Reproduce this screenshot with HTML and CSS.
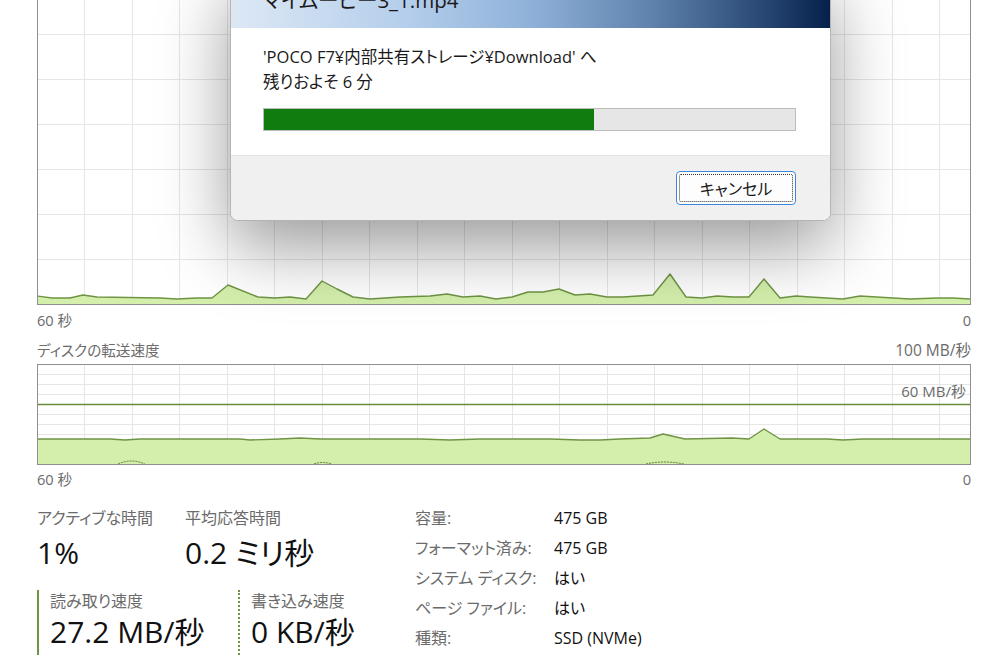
FILE: index.html
```html
<!DOCTYPE html>
<html lang="ja">
<head>
<meta charset="utf-8">
<title>ディスク</title>
<link rel="stylesheet" href="styles.css">
</head>
<body>
<div class="page">
  <div class="graph graph-top">
    <svg class="gsvg" width="932" height="344" viewBox="38 -40 932 344">
      <path class="grid" d="M84.5 -40V304M132.5 -40V304M179.5 -40V304M227.5 -40V304M274.5 -40V304M322.5 -40V304M369.5 -40V304M417.5 -40V304M464.5 -40V304M512.5 -40V304M559.5 -40V304M607.5 -40V304M654.5 -40V304M702.5 -40V304M749.5 -40V304M797.5 -40V304M844.5 -40V304M892.5 -40V304M939.5 -40V304M38 34.5H970M38 79.5H970M38 124.5H970M38 169.5H970M38 214.5H970M38 259.5H970"/>
      <path class="fill" d="M37 304L37 296 52 298 70 298 83 295 97 297 160 298 177 299 197 298 212 298 228 285 258 297 275 298 290 297 306 299 322 281 337 289 353 297 370 299 400 297 430 296 447 294 463 297 480 296 496 299 512 297 528 292 543 292 559 289 575 295 590 294 607 297 623 297 653 295 670 274 686 297 702 298 717 296 733 297 749 297 764 279 780 298 796 296 810 297 843 299 860 296 893 298 910 299 937 298 953 298 970 299 970 304Z"/>
      <polyline class="line" points="37,296 52,298 70,298 83,295 97,297 160,298 177,299 197,298 212,298 228,285 258,297 275,298 290,297 306,299 322,281 337,289 353,297 370,299 400,297 430,296 447,294 463,297 480,296 496,299 512,297 528,292 543,292 559,289 575,295 590,294 607,297 623,297 653,295 670,274 686,297 702,298 717,296 733,297 749,297 764,279 780,298 796,296 810,297 843,299 860,296 893,298 910,299 937,298 953,298 970,299"/>
    </svg>
  </div>
  <div class="axis axis-1"><span>60 秒</span><span>0</span></div>
  <div class="axis axis-title"><span>ディスクの転送速度</span><span>100 MB/秒</span></div>
  <div class="graph graph-disk">
    <svg class="gsvg" width="932" height="99" viewBox="38 365 932 99">
      <path class="grid" d="M84.5 365V464M132.5 365V464M179.5 365V464M227.5 365V464M274.5 365V464M322.5 365V464M369.5 365V464M417.5 365V464M464.5 365V464M512.5 365V464M559.5 365V464M607.5 365V464M654.5 365V464M702.5 365V464M749.5 365V464M797.5 365V464M844.5 365V464M892.5 365V464M939.5 365V464M38 374.5H970M38 384.5H970M38 394.5H970M38 414.5H970M38 424.5H970M38 434.5H970M38 444.5H970M38 454.5H970"/>
      <path class="fill" d="M37 464L37 439 110 439 125 440 140 439 240 439 250 440 280 439 300 438 320 439 420 439 450 440 480 439 550 439 580 440 600 440 620 439 650 438 663 434 685 439 732 438 749 439 764 429 780 439 827 439 843 440 863 439 970 439 970 464Z"/>
      <polyline class="line" points="37,439 110,439 125,440 140,439 240,439 250,440 280,439 300,438 320,439 420,439 450,440 480,439 550,439 580,440 600,440 620,439 650,438 663,434 685,439 732,438 749,439 764,429 780,439 827,439 843,440 863,439 970,439"/>
      <path class="limit" d="M38 404.5H970"/>
      <path class="write" d="M118 464Q131 458 145 464M314 464Q322 461 332 464M646 464Q664 460 684 464"/>
    </svg>
    <span class="limit-label">60 MB/秒</span>
  </div>
  <div class="axis axis-2"><span>60 秒</span><span>0</span></div>

  <div class="stats">
    <div class="stats-left">
      <div class="stat-row">
        <div class="stat stat-active">
          <div class="stat-label">アクティブな時間</div>
          <div class="stat-value">1%</div>
        </div>
        <div class="stat">
          <div class="stat-label">平均応答時間</div>
          <div class="stat-value">0.2 ミリ秒</div>
        </div>
      </div>
      <div class="stat-row rate-row">
        <div class="stat rate rate-read">
          <div class="stat-label">読み取り速度</div>
          <div class="stat-value">27.2 MB/秒</div>
        </div>
        <div class="stat rate rate-write">
          <div class="stat-label">書き込み速度</div>
          <div class="stat-value">0 KB/秒</div>
        </div>
      </div>
    </div>
    <dl class="props">
      <dt>容量:</dt><dd>475 GB</dd>
      <dt>フォーマット済み:</dt><dd>475 GB</dd>
      <dt>システム ディスク:</dt><dd>はい</dd>
      <dt>ページ ファイル:</dt><dd>はい</dd>
      <dt>種類:</dt><dd>SSD (NVMe)</dd>
    </dl>
  </div>
</div>

<div class="dialog">
  <div class="dialog-title"><span>マイムービー3_1.mp4</span></div>
  <div class="dialog-body">
    <p class="dialog-line">'POCO F7¥内部共有ストレージ¥Download' へ</p>
    <p class="dialog-line">残りおよそ 6 分</p>
    <div class="progress"><div class="progress-fill" style="width: 62.2%"></div></div>
  </div>
  <div class="dialog-footer">
    <button class="btn" type="button"><span class="btn-focus">キャンセル</span></button>
  </div>
</div>
</body>
</html>
```

FILE: styles.css
```css
html, body {
  margin: 0;
  padding: 0;
}
body {
  width: 1005px;
  height: 670px;
  overflow: hidden;
  background: #ffffff;
  position: relative;
  font-family: "Open Sans", "Noto Sans CJK JP", sans-serif;
  font-feature-settings: "palt";
  color: #1a1a1a;
}
.page {
  padding-left: 37px;
  width: 934px;
}
.graph {
  position: relative;
  box-sizing: border-box;
  width: 934px;
  border: 1px solid #8f8f8f;
  background: #ffffff;
}
.graph-top {
  margin-top: -41px;
  height: 346px;
}
.graph-disk {
  margin-top: 4px;
  height: 101px;
}
.gsvg {
  display: block;
}
.grid {
  stroke: #e6e6e6;
  stroke-width: 1;
  fill: none;
}
.fill {
  fill: #d4efac;
  stroke: none;
}
.line {
  fill: none;
  stroke: #6f9444;
  stroke-width: 1.4;
  stroke-linejoin: round;
}
.limit {
  stroke: #6a8c36;
  stroke-width: 1.3;
  fill: none;
}
.write {
  fill: none;
  stroke: #5b7c2c;
  stroke-width: 1;
  stroke-dasharray: 2 1;
}
.limit-label {
  position: absolute;
  right: 4px;
  top: 16px;
  font-size: 15px;
  line-height: 20px;
  color: #6b6b6b;
}
.axis {
  display: flex;
  justify-content: space-between;
  font-size: 14.6px;
  line-height: 20px;
  color: #6b6b6b;
}
.axis-title span:last-child {
  font-size: 15.5px;
}
.axis-1 {
  padding-top: 5px;
}
.axis-title {
  margin-top: 10px;
}
.axis-2 {
  margin-top: 4px;
}

.stats {
  display: flex;
}
.stats-left {
  width: 378px;
  padding-top: 19px;
}
.stat-row {
  display: flex;
}
.stat-active {
  width: 148px;
}
.stat-label {
  font-size: 16px;
  line-height: 20px;
  color: #6b6b6b;
}
.stat-value {
  margin-top: 7px;
  font-size: 30px;
  line-height: 36px;
  color: #111111;
}
.rate-row {
  margin-top: 19px;
}
.rate {
  box-sizing: border-box;
  height: 65px;
  padding-top: 1px;
  padding-left: 11px;
}
.rate .stat-value {
  margin-top: 0;
  line-height: 42px;
}
.rate-read {
  width: 201px;
  border-left: 2px solid #6f9444;
}
.rate-write {
  border-left: 2px dotted #6f9444;
}

.props {
  margin: 0;
  padding-top: 14px;
  display: grid;
  grid-template-columns: 139px auto;
  grid-auto-rows: 30px;
  font-size: 16px;
  line-height: 30px;
}
.props dt {
  color: #6b6b6b;
}
.props dd {
  margin: 0;
  color: #111111;
}

.dialog {
  position: absolute;
  left: 230px;
  top: -30px;
  width: 601px;
  box-sizing: border-box;
  border: 1px solid #b4b4b4;
  border-radius: 8px;
  overflow: hidden;
  background: #ffffff;
  box-shadow: 0 26px 70px rgba(0, 0, 0, 0.4);
}
.dialog-title {
  height: 57px;
  background: linear-gradient(to right, #dde8f5 0%, #b3cdeb 30%, #8fb1d9 50%, #5f83ad 70%, #2b4b76 88%, #05204b 100%);
  padding-left: 32px;
  box-sizing: border-box;
}
.dialog-title span {
  display: block;
  padding-top: 15px;
  font-size: 20.5px;
  line-height: 28px;
  color: #1a1a1a;
}
.dialog-body {
  padding: 16px 34px 24px 32px;
}
.dialog-line {
  margin: 0;
  font-size: 16.5px;
  line-height: 25px;
  color: #1a1a1a;
}
.progress {
  margin-top: 14px;
  height: 23px;
  box-sizing: border-box;
  border: 1px solid #bcbcbc;
  background: #e6e6e6;
}
.progress-fill {
  height: 100%;
  background: #107c10;
}
.dialog-footer {
  display: flex;
  justify-content: flex-end;
  height: 65px;
  box-sizing: border-box;
  padding: 15px 34px 0 0;
  background: #f0f0f0;
  border-top: 1px solid #e3e3e3;
}
.btn {
  width: 120px;
  height: 34px;
  padding: 2px;
  border: 1px solid #3f86d6;
  border-radius: 4px;
  background: #fdfdfd;
  font-family: inherit;
  font-feature-settings: "palt";
  cursor: default;
}
.btn-focus {
  display: flex;
  align-items: center;
  justify-content: center;
  height: 100%;
  box-sizing: border-box;
  border: 1px dotted #333333;
  border-radius: 2px;
  font-size: 16px;
  color: #1a1a1a;
}
```
